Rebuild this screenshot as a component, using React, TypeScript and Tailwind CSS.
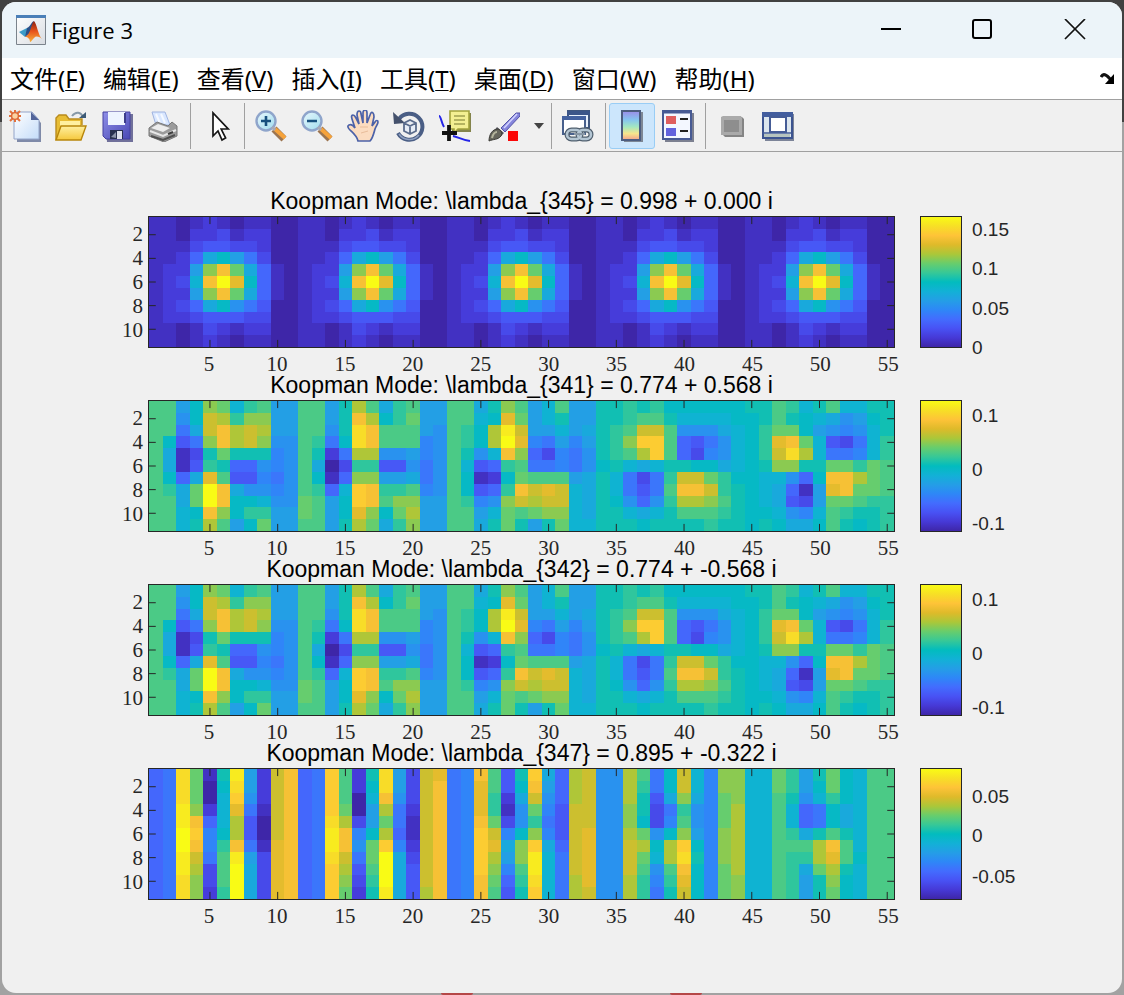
import React from "react";

type RGB = [number, number, number];

const PARULA: RGB[] = [
  [62, 38, 168], [70, 57, 214], [72, 82, 244], [67, 108, 254], [46, 135, 247],
  [36, 158, 230], [18, 177, 214], [2, 188, 190], [55, 200, 151], [104, 205, 108],
  [171, 199, 57], [222, 186, 42], [254, 195, 56], [247, 223, 38], [249, 251, 21],
];

const BAR_GRADIENT =
  "linear-gradient(to top," + PARULA.map((c) => `rgb(${c.join(",")})`).join(",") + ")";

function colorOf(letter: string): string {
  const t = ((letter.charCodeAt(0) - 97) / 25) * (PARULA.length - 1);
  const i = Math.min(PARULA.length - 2, Math.floor(t));
  const f = t - i;
  const c = PARULA[i].map((v, k) => Math.round(v + (PARULA[i + 1][k] - v) * f));
  return `rgb(${c.join(",")})`;
}

/* Each letter is one cell value: a is the lowest, z the highest. */
const PEAK = [
  "bbabcbabbaa", "bbaccdbccaa", "bbbdeeddcaa", "bbcfkmjgdaa", "bccjrvqkfba",
  "bcdlvzumfba", "bccjrvqkfba", "bcdfkmigeaa", "bccdeeeddaa", "bbabdcbccaa", "bbabcbabbaa",
];
const mode345 = PEAK.map((r) => r.repeat(5));

const mode341 = [
  "ppjmrqlopjj" + "ppjnspkopjj" + "ppknrpjlpjj" + "nnonommmmmm" + "nnpolnpllnn",
  "ppimtsorrjj" + "ppjnvsmoqjj" + "pplmuqjlnjj" + "nnoppnllllm" + "mnpnmlkijmn",
  "ppgktvstsjj" + "ppinxvpppji" + "pomsytjjljk" + "nopttpiiikl" + "moqqmjihiln",
  "pmegrvstrii" + "pogmxvppphi" + "pomszuhgjhj" + "norwwpfegil" + "mouvqledglo",
  "pkbdnqnnnhi" + "pncgssiijhi" + "pnilvrfdhgi" + "nopswpfdhil" + "motxslgghlo",
  "pkbeonffihi" + "pkadooeeigi" + "plefopgghgi" + "mnlklnnmmkl" + "mnrrnnqqoqp",
  "pmfkupeehgi" + "pmbfrrjjkgi" + "pmbcmqpppjk" + "nlgdgottqom" + "mllifmvvsqp",
  "pokqzvkiihi" + "poflwvoophi" + "pmefovtutlk" + "nlgegpvvton" + "mlkfbjuvqqp",
  "ppkqzvmmlii" + "qpjmwvprrjj" + "pohirtsttlk" + "nmifiossrpn" + "mlkedjqqpoo",
  "pplmvrmoojj" + "qpjmurmqsjj" + "ppjlqpqrrlk" + "nnlklnpppon" + "mmlihlponno",
  "pplnspjmqjj" + "ppjnsqkorjj" + "ppknqnjnqll" + "nnnmnnnnonn" + "mnmkkmpnmno",
];

const COLS_347 = [
  "fffffffffff", "ggggggggggg", "xxxyyzzyyxx", "qqqrvwvtsrr", "baacfhhgddc", "nmlllmopppo",
  "yxwussvyzzz", "jjigeegjkkk", "cccbaabdddd", "ttttttuuuuu", "vvvvvvvvvvv",
  "fffffffffff", "ggggggggggg", "wwwwxyyxwww", "pppqsvvtsrq", "ccaadhigedc", "nmljjmqqpon",
  "xxvsqswzzzy", "jjiggfhkkkk", "dddcbbcdeee", "tttttttttts", "uvvvvvvvvvv",
  "ggggggggggg", "hhhhhhhhhhh", "vuuuvwwwwvv", "ppooqtusrqp", "eecbdhkjhfe", "nmkiimrrpon",
  "wvtqorwyyxw", "kjihghkllll", "fffeeefgggg", "sssttttttss", "tttttuuuuut",
  "iiiiiiiiiii", "iiiiiiiiiii", "sssrrstttss", "ponnmqsqpoo", "ggeddimlihg", "mmkghmsspon",
  "ttroprwxvut", "llkiijmnmmm", "hhhhhhhhhhh", "rrqqqrrrqqq", "rrrssssssrr",
  "lllllllllll", "lllllllllll", "qqppppppppp", "oonllopoooo", "jjiffkpokjj", "nmlggnssqnn",
  "qqommpvusrq", "mmmkknppnmm", "lllllllmlll", "ppppppppppp", "ppppppppppp",
];
const mode347 = Array.from({ length: 11 }, (_, r) => COLS_347.map((c) => c[r]).join(""));

interface Tick { label: string; at: number }
interface Mode { title: string; rows: string[]; ticks: Tick[] }

const TICKS_341: Tick[] = [
  { label: "0.1", at: 11.5 }, { label: "0", at: 52.5 }, { label: "-0.1", at: 93.5 },
];

const MODES: Mode[] = [
  {
    title: "Koopman Mode: \\lambda_{345} = 0.998 + 0.000 i",
    rows: mode345,
    ticks: [{ label: "0.15", at: 10 }, { label: "0.1", at: 39.5 }, { label: "0.05", at: 69.5 }, { label: "0", at: 99 }],
  },
  { title: "Koopman Mode: \\lambda_{341} = 0.774 + 0.568 i", rows: mode341, ticks: TICKS_341 },
  { title: "Koopman Mode: \\lambda_{342} = 0.774 + -0.568 i", rows: mode341, ticks: TICKS_341 },
  {
    title: "Koopman Mode: \\lambda_{347} = 0.895 + -0.322 i",
    rows: mode347,
    ticks: [{ label: "0.05", at: 21 }, { label: "0", at: 51 }, { label: "-0.05", at: 81.5 }],
  },
];

const X_TICKS = [5, 10, 15, 20, 25, 30, 35, 40, 45, 50, 55];
const Y_TICKS = [2, 4, 6, 8, 10];

function Heatmap({ rows, title }: { rows: string[]; title: string }) {
  return (
    <svg role="img" aria-label={title} viewBox="0 0 55 11" preserveAspectRatio="none" className="block h-full w-full">
      <g shapeRendering="crispEdges">
        {rows.map((row, y) =>
          row.split("").map((v, x) => <rect key={`${x}-${y}`} x={x} y={y} width={1} height={1} fill={colorOf(v)} />)
        )}
      </g>
      <g stroke="#262626" strokeWidth={1}>
        {X_TICKS.map((v) => (
          <path key={v} vectorEffect="non-scaling-stroke" d={`M${v - 0.5} 0v.6M${v - 0.5} 11v-.6`} />
        ))}
        {Y_TICKS.map((v) => (
          <path key={v} vectorEffect="non-scaling-stroke" d={`M0 ${v - 0.5}h.5M55 ${v - 0.5}h-.5`} />
        ))}
      </g>
    </svg>
  );
}

function Subplot({ mode }: { mode: Mode }) {
  return (
    <section className="grid grid-cols-[146px_minmax(0,1fr)_25px_42px_160px] grid-rows-[26px_132px_26px]">
      <h2 className="col-start-2 flex justify-center whitespace-nowrap text-[23px] leading-[22px] text-black">
        {mode.title}
      </h2>
      <div className="col-start-1 row-start-2 grid grid-rows-[repeat(11,minmax(0,1fr))] pr-[5px] font-['Liberation_Serif',serif] text-[21px] leading-none">
        {Y_TICKS.map((v) => (
          <span key={v} className="flex min-h-0 items-center justify-end" style={{ gridRow: v }}>{v}</span>
        ))}
      </div>
      <div className="col-start-2 row-start-2 border border-[#262626]">
        <Heatmap rows={mode.rows} title={mode.title} />
      </div>
      <div className="col-start-2 row-start-3 grid grid-cols-[repeat(55,minmax(0,1fr))] pt-[6px] font-['Liberation_Serif',serif] text-[21px] leading-none">
        {X_TICKS.map((v) => (
          <span key={v} className="flex min-w-0 justify-center" style={{ gridColumn: v }}>{v}</span>
        ))}
      </div>
      <div className="col-start-4 row-start-2 border border-[#262626]" style={{ backgroundImage: BAR_GRADIENT }} />
      <div className="relative col-start-5 row-start-2 text-[19px] leading-none">
        {mode.ticks.map((t) => (
          <span key={t.label} className="absolute left-[10px] -translate-y-1/2" style={{ top: `${t.at}%` }}>{t.label}</span>
        ))}
      </div>
    </section>
  );
}

function Icon({ children }: { children: React.ReactNode }) {
  return <svg viewBox="0 0 32 32" className="size-8" aria-hidden="true">{children}</svg>;
}

const NewIcon = (
  <Icon>
    <path d="M8 5h17l7 8v19H8z" fill="#7f8aa8" />
    <path d="M5 2h18l7 8v19H5z" fill="url(#paper)" stroke="#93a4c9" />
    <path d="M22 2v8h8z" fill="#53659a" />
    <g stroke="#e2713c" strokeWidth="2"><path d="M1 1l10 10M11 1L1 11M6 0v12M0 6h12" /></g>
    <circle cx="6" cy="6" r="3.4" fill="#fbd2a2" stroke="#dc6534" strokeWidth="1.4" />
  </Icon>
);
const OpenIcon = (
  <Icon>
    <path d="M17 6c4-5 9-4 11 1" fill="none" stroke="#8799a8" strokeWidth="2" />
    <path d="M24 8h7V2z" fill="#3d5a76" />
    <path d="M1 30V8l3-3h7l3 4h13v6" fill="#e8bd35" stroke="#b98b1d" strokeWidth="1.4" />
    <path d="M5 11h20v5H5z" fill="#fff0a0" />
    <path d="M6 16h25l-5 14H1z" fill="url(#folder)" stroke="#b8860b" strokeWidth="1.4" />
  </Icon>
);
const SaveIcon = (
  <Icon>
    <path d="M4 4h28v28H6z" fill="#70709a" />
    <path d="M2 2h27v27H5l-3-3z" fill="url(#disk)" stroke="#4540a0" />
    <path d="M7 2h17v13H7z" fill="#eef4ff" />
    <path d="M23 3h2v10h-2z" fill="#3c3c8c" />
    <path d="M9 20h13v9H9z" fill="#283050" />
    <path d="M16 21h5v8h-5z" fill="#dfe2ee" />
    <path d="M10 27l5-5v6z" fill="#8c94aa" />
  </Icon>
);
const PrintIcon = (
  <Icon>
    <path d="M5 2h13l5 13H9z" fill="#d9e7ff" stroke="#a0b4e0" />
    <path d="M9 4l4 9M14 4l4 9" stroke="#f5f9ff" strokeWidth="2" />
    <path d="M2 18l8-6 11 4 4-4 5 4v10l-13 6-15-6z" fill="#9b9b9b" stroke="#777" />
    <path d="M4 18l7-4 12 4-7 4z" fill="#ececec" />
    <path d="M3 21l13 5 13-6" fill="none" stroke="#e6e6e6" strokeWidth="2" />
    <path d="M4 26l12 4 12-5" fill="none" stroke="#505050" strokeWidth="2" />
    <path d="M21 24l5-2" stroke="#404040" strokeWidth="2" />
  </Icon>
);
const PointerIcon = (
  <Icon>
    <path d="M12 3v23l5-5 4 9 3.6-2-4.4-9h7z" fill="#fff" stroke="#161616" strokeWidth="1.7" />
  </Icon>
);
const lens = (
  <>
    <path d="M19 19l10 10" stroke="#9c7550" strokeWidth="7" />
    <path d="M20 19l10 9" stroke="#f6a33b" strokeWidth="4" />
    <circle cx="11" cy="11" r="9.5" fill="url(#glass)" stroke="#8fa5cb" strokeWidth="2.4" />
    <path d="M17 17l3 3" stroke="#a9a9b4" strokeWidth="3" />
  </>
);
const ZoomInIcon = <Icon>{lens}<path d="M6 11h10M11 6v10" stroke="#17507e" strokeWidth="2.6" /></Icon>;
const ZoomOutIcon = <Icon>{lens}<path d="M6 11h10" stroke="#17507e" strokeWidth="2.6" /></Icon>;
const PanIcon = (
  <Icon>
    <path
      d="M11 31c-1-5-5-8-8-11-2-2-3-4-1-5s4 0 6 3L5 9C4 6 5 5 6 5s2 1 3 3l3 6-2-9c0-3 1-4 2-4s2 1 2 3l2 9 0-10c0-2 1-3 2-3s2 1 2 3v10l3-8c1-3 2-3 3-2s1 2 1 4l-2 9 3-4c1-2 3-2 3 0s-2 4-3 7-2 9-5 12z"
      fill="#fbdcc0" stroke="#4c62a8" strokeWidth="1.7"
    />
    <path d="M13 17h8M14 23l7-2" stroke="#e8bd9b" fill="none" />
  </Icon>
);
const RotateIcon = (
  <Icon>
    <path d="M6 9a13 13 0 1 1-1 14" fill="none" stroke="#4a5e85" strokeWidth="4" />
    <path d="M6 24a12.5 12.5 0 0 0 20 1" fill="none" stroke="#8fa0c0" strokeWidth="1.6" />
    <path d="M0 2l1 12 11-1z" fill="#44516c" />
    <path d="M11 13l6-3 6 3v8l-6 3-6-3zM11 13l6 3 6-3M17 16v8" fill="#e7edf6" stroke="#5b6c8c" strokeWidth="1.8" />
  </Icon>
);
const DataTipIcon = (
  <Icon>
    <path d="M0 6c2 0 2 6 5 11" fill="none" stroke="#2424e8" strokeWidth="2" />
    <path d="M14 26c5 1 9 4 17 5" fill="none" stroke="#2424e8" strokeWidth="2" />
    <path d="M13 3h19v19H13z" fill="#84844c" />
    <path d="M11 1h19v18H19l-4 4v-4h-4z" fill="#f3ef92" stroke="#a3a33c" strokeWidth="1.6" />
    <path d="M15 6h11M15 10h11M15 14h11" stroke="#a0a050" strokeWidth="1.5" />
    <path d="M3 23h15M10 15v16" stroke="#111" strokeWidth="3.8" />
  </Icon>
);
const BrushIcon = (
  <Icon>
    <path d="M13 18L28 3h4v3L17 22z" fill="#8585dc" stroke="#5555a8" />
    <path d="M16 18L29 4" stroke="#d4d4ff" strokeWidth="1.5" />
    <path d="M9 17l7 6-3 3-7-5z" fill="#55555f" />
    <path d="M10 19c3 1 5 4 3 7-3 4-8 3-12 5 0-6 3-12 9-12z" fill="#66665c" stroke="#3c3c38" />
    <path d="M4 28c1-4 3-6 5-6" stroke="#b4b49c" fill="none" strokeWidth="2" />
    <path d="M20 21h10v10H20z" fill="#fb0707" />
  </Icon>
);
const LinkIcon = (
  <Icon>
    <path d="M6 1h21v17H6z" fill="#e9f1fb" stroke="#40577f" strokeWidth="2" />
    <path d="M5 1h23v4H5z" fill="#3c5689" />
    <path d="M1 7h22v17H1z" fill="#fff" stroke="#48608c" strokeWidth="2" />
    <path d="M0 6h24v4H0z" fill="#4462a0" />
    <g fill="none" strokeWidth="5" stroke="#51606f">
      <rect x="5" y="20" width="14" height="9" rx="4.5" /><rect x="16" y="20" width="13" height="9" rx="4.5" />
    </g>
    <g fill="none" strokeWidth="2.6" stroke="#b4c6d4">
      <rect x="5" y="20" width="14" height="9" rx="4.5" /><rect x="16" y="20" width="13" height="9" rx="4.5" />
    </g>
    <path d="M12 24h11" stroke="#8796a5" strokeWidth="2" />
  </Icon>
);
const ColorbarIcon = (
  <Icon>
    <path d="M8 2h19v30H8z" fill="#7d8795" />
    <path d="M6 1h18v29H6z" fill="url(#rainbow)" stroke="#4c5d80" strokeWidth="2" />
  </Icon>
);
const LegendIcon = (
  <Icon>
    <path d="M3 3h29v29H3z" fill="#7c8090" />
    <path d="M1 1h28v28H1z" fill="#f3f7ff" stroke="#475a94" strokeWidth="2" />
    <path d="M1 2h28" stroke="#475a94" strokeWidth="3" />
    <path d="M4 6h10v8H4z" fill="#df5e5e" />
    <path d="M4 18h10v8H4z" fill="#6262dd" />
    <path d="M18 9h8M18 21h8" stroke="#222" strokeWidth="2.2" />
  </Icon>
);
const HideToolsIcon = (
  <Icon>
    <path d="M7 7h19l2 2v18H9l-2-2z" fill="#858585" />
    <path d="M5 7l2-1h18l1 2v17H5z" fill="#aaa" />
    <path d="M8 10h15v12H8z" fill="#8e8e8e" />
  </Icon>
);
const ShowToolsIcon = (
  <Icon>
    <path d="M3 4h29v27H3z" fill="#7c8498" />
    <path d="M1 3h29v25H1z" fill="#dce6ee" stroke="#3c5490" strokeWidth="2" />
    <path d="M0 2h31v5H0z" fill="#435e9e" />
    <path d="M8 7h16v15H8z" fill="#fff" stroke="#455c96" strokeWidth="2" />
    <path d="M1 23h28" stroke="#455c96" strokeWidth="1.5" />
    <path d="M2 24h26v3H2z" fill="#b6c4bf" />
  </Icon>
);

function ToolButton({ label, active, wide, children }: { label: string; active?: boolean; wide?: boolean; children: React.ReactNode }) {
  return (
    <button
      type="button"
      aria-label={label}
      aria-pressed={active}
      className={
        "flex h-[46px] shrink-0 items-center justify-center rounded-[3px] border " +
        (wide ? "w-[52px] " : "w-[46px] ") +
        (active ? "border-[#99cdf5] bg-[#cce6fc]" : "border-transparent hover:bg-[#e0eefa]")
      }
    >
      {children}
    </button>
  );
}

const Separator = () => <span className="ml-1 mr-[3px] h-[46px] w-px shrink-0 bg-[#a0a0a0]" />;

const MENUS = [
  ["文件", "F"], ["编辑", "E"], ["查看", "V"], ["插入", "I"],
  ["工具", "T"], ["桌面", "D"], ["窗口", "W"], ["帮助", "H"],
];

function Definitions() {
  return (
    <svg className="absolute size-0" aria-hidden="true">
      <defs>
        <linearGradient id="paper" x2="1" y2="1"><stop stopColor="#fff" /><stop offset="1" stopColor="#c4dcf9" /></linearGradient>
        <linearGradient id="folder" x2="0" y2="1"><stop stopColor="#fff0a0" /><stop offset="1" stopColor="#f5c83c" /></linearGradient>
        <linearGradient id="disk" x2="1" y2="1"><stop stopColor="#8f8fe8" /><stop offset="1" stopColor="#4848b4" /></linearGradient>
        <linearGradient id="glass" x2="1" y2="1"><stop stopColor="#e8f8fd" /><stop offset="1" stopColor="#a0dcee" /></linearGradient>
        <linearGradient id="tile" x2="1" y2="1"><stop stopColor="#fff" /><stop offset="1" stopColor="#d8dce2" /></linearGradient>
        <linearGradient id="rainbow" x2="0" y2="1">
          <stop stopColor="#9b8ce8" /><stop offset=".3" stopColor="#85c4f0" /><stop offset=".55" stopColor="#a4e8c0" />
          <stop offset=".78" stopColor="#f6e58c" /><stop offset="1" stopColor="#f2a08c" />
        </linearGradient>
        <linearGradient id="flame" x2="0" y2="1"><stop stopColor="#8c1f10" /><stop offset=".5" stopColor="#e8551c" /><stop offset="1" stopColor="#f7b23c" /></linearGradient>
      </defs>
    </svg>
  );
}

function TitleBar() {
  return (
    <header className="flex h-14 items-center bg-[#ecf4f9] pl-[13px] pr-px">
      <svg viewBox="0 0 32 32" className="size-8" aria-hidden="true">
        <path d="M1.5 1.5h29v29h-29z" fill="url(#tile)" stroke="#7b838c" />
        <path d="M1 1h30v3H1z" fill="#4a7fb8" />
        <path d="M4 18l8-4 3 4-5 5z" fill="#3c9bc8" />
        <path d="M12 14c4-2 4-6 7-7l-4 12-5 4z" fill="#2c4f87" />
        <path d="M19 7c3 3 4 14 8 18-4-3-6-3-8-1s-3 4-4 4c0-3-2-5-5-5 6-3 6-13 9-16z" fill="url(#flame)" />
      </svg>
      <h1 className="flex-1 pl-1 font-['Open_Sans','Noto_Sans',sans-serif] text-[22px] text-black">Figure 3</h1>
      <button type="button" aria-label="Minimize" className="flex h-full w-[92px] items-center justify-center">
        <svg viewBox="0 0 22 22" className="size-[22px]"><path d="M1 10h20" stroke="#000" strokeWidth="2" /></svg>
      </button>
      <button type="button" aria-label="Maximize" className="flex h-full w-[92px] items-center justify-center">
        <svg viewBox="0 0 22 22" className="size-[22px]"><rect x="1" y="1" width="18" height="18" rx="2" fill="none" stroke="#000" strokeWidth="2" /></svg>
      </button>
      <button type="button" aria-label="Close" className="flex h-full w-[92px] items-center justify-center">
        <svg viewBox="0 0 22 22" className="size-[22px]"><path d="M1 0l20 20M21 0L1 20" stroke="#111" strokeWidth="1.7" /></svg>
      </button>
    </header>
  );
}

export default function App() {
  return (
    <div className="relative flex min-h-screen flex-col overflow-hidden bg-[#a2a2a2] bg-[linear-gradient(#414141,#414141)] bg-[length:100%_122px] bg-no-repeat p-[2px] font-['Liberation_Sans',Arial,sans-serif] text-[#262626]">
      <Definitions />
      <span className="absolute bottom-0 left-[441px] h-1 w-8 rounded-full bg-[#b54747]" />
      <span className="absolute bottom-0 left-[670px] h-1 w-8 rounded-full bg-[#b54747]" />
      <div className="relative flex flex-1 flex-col overflow-hidden rounded-[14px] bg-[#f0f0f0]">
        <TitleBar />
        <nav className="flex h-[41px] items-center gap-[18px] bg-white pl-2 pr-[6px] font-['Noto_Sans','Noto_Sans_CJK_SC',sans-serif] text-2xl text-black">
          {MENUS.map(([name, key]) => (
            <button type="button" key={key} className="whitespace-nowrap leading-8">
              {name}(<span className="underline decoration-1 underline-offset-2">{key}</span>)
            </button>
          ))}
          <button type="button" aria-label="Dock figure" className="ml-auto">
            <svg viewBox="0 0 16 14" className="h-[14px] w-4">
              <path d="M1 5C3 1 6 2 11 8" fill="none" stroke="#111" strokeWidth="3" />
              <path d="M14 2v10H5z" fill="#000" />
            </svg>
          </button>
        </nav>
        <div role="toolbar" aria-label="Figure tools" className="flex h-[53px] items-center border-y border-[#a0a0a0] bg-[#f0f0f0]">
          <ToolButton label="New figure">{NewIcon}</ToolButton>
          <ToolButton label="Open file">{OpenIcon}</ToolButton>
          <ToolButton label="Save figure">{SaveIcon}</ToolButton>
          <ToolButton label="Print figure">{PrintIcon}</ToolButton>
          <Separator />
          <ToolButton label="Edit plot">{PointerIcon}</ToolButton>
          <Separator />
          <ToolButton label="Zoom in">{ZoomInIcon}</ToolButton>
          <ToolButton label="Zoom out">{ZoomOutIcon}</ToolButton>
          <ToolButton label="Pan">{PanIcon}</ToolButton>
          <ToolButton label="Rotate 3D">{RotateIcon}</ToolButton>
          <ToolButton label="Data cursor">{DataTipIcon}</ToolButton>
          <ToolButton label="Brush data" wide>{BrushIcon}</ToolButton>
          <button type="button" aria-label="Brush options" className="flex h-[46px] w-[17px] shrink-0 items-center justify-center">
            <svg viewBox="0 0 10 6" className="h-[6px] w-[10px]"><path d="M0 0h10L5 6z" fill="#444" /></svg>
          </button>
          <Separator />
          <ToolButton label="Link plot">{LinkIcon}</ToolButton>
          <Separator />
          <ToolButton label="Insert colorbar" active>{ColorbarIcon}</ToolButton>
          <ToolButton label="Insert legend">{LegendIcon}</ToolButton>
          <Separator />
          <ToolButton label="Hide plot tools">{HideToolsIcon}</ToolButton>
          <ToolButton label="Show plot tools">{ShowToolsIcon}</ToolButton>
        </div>
        <main className="flex-1 pt-[38px]">
          {MODES.map((m) => (
            <Subplot key={m.title} mode={m} />
          ))}
        </main>
      </div>
    </div>
  );
}
